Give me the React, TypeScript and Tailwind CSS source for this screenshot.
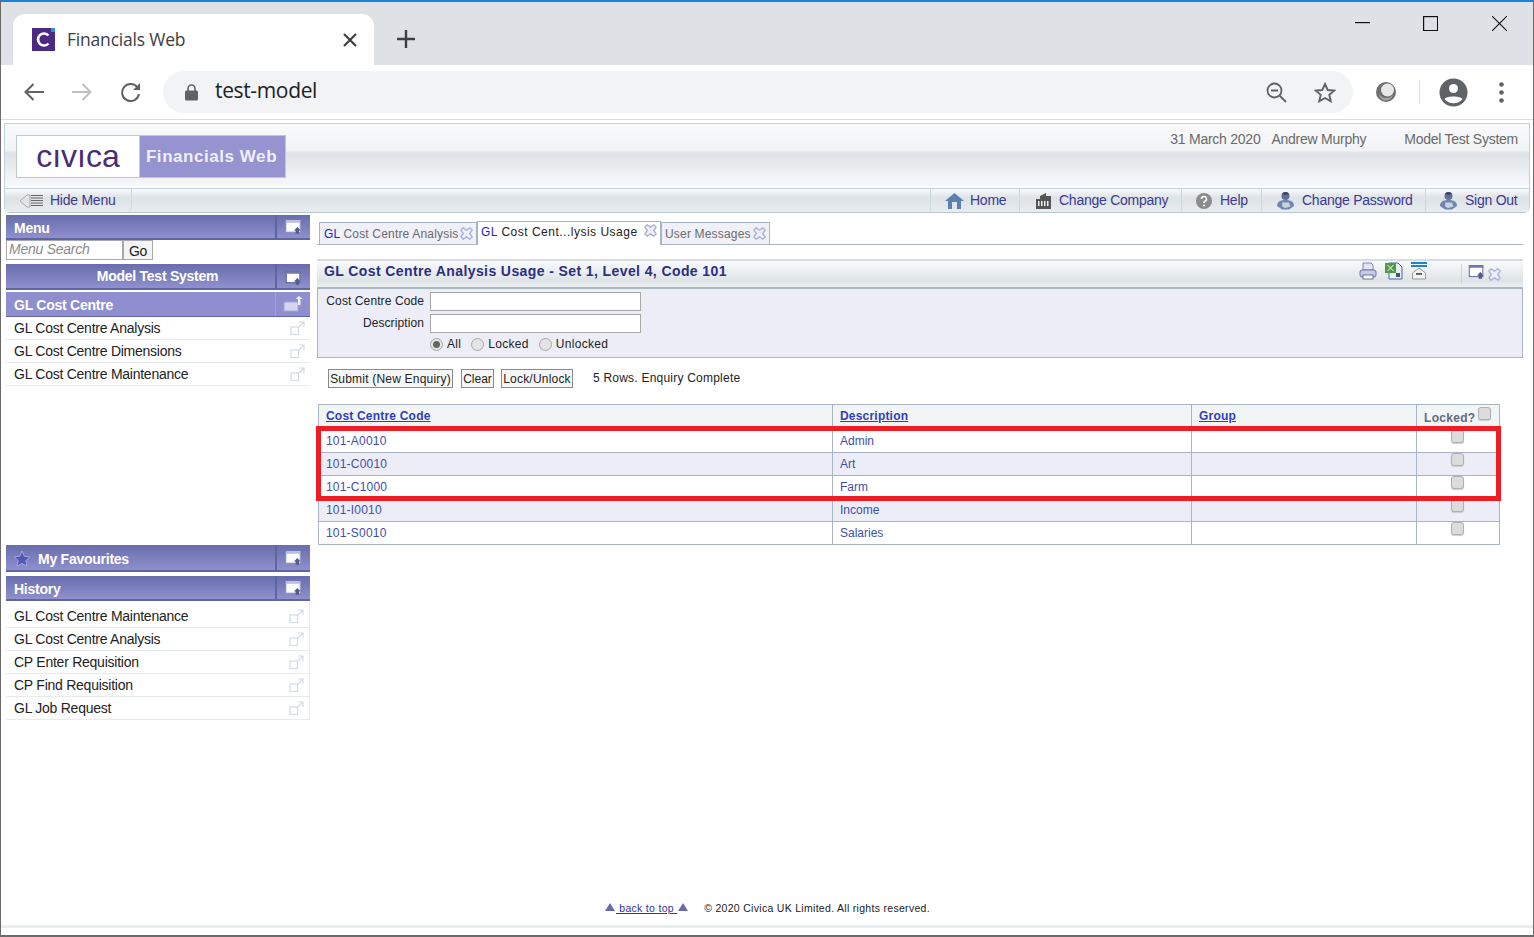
import type { ReactNode } from "react";

const headBar = "bg-[linear-gradient(#686dab,#8f90cd)] border-b-2 border-[#5f64a3]";
const menuTop = ["GL Cost Centre Analysis", "GL Cost Centre Dimensions", "GL Cost Centre Maintenance"];
const history = ["GL Cost Centre Maintenance", "GL Cost Centre Analysis", "CP Enter Requisition", "CP Find Requisition", "GL Job Request"];
const rows = [
  ["101-A0010", "Admin"],
  ["101-C0010", "Art"],
  ["101-C1000", "Farm"],
  ["101-I0010", "Income"],
  ["101-S0010", "Salaries"],
];

const WindowIcon = ({ dark = false }: { dark?: boolean }) => (
  <svg width="17" height="16" viewBox="0 0 20 18">
    <rect x="1.5" y="1.5" width="16" height="13" fill="#fff" stroke={dark ? "#4b5085" : "#d6d8ee"} />
    <rect x="1" y="1" width="17" height="3" fill={dark ? "#7277b0" : "#b9bce0"} />
    <path d="M14.5 9l4 4h-2v4h-4v-4h-2z" fill="#555c86" />
  </svg>
);

const ExtLink = () => (
  <svg width="15" height="15" viewBox="0 0 15 15" fill="none" stroke="#d3dbe7" strokeWidth="1.2">
    <rect x="1" y="6" width="7.5" height="7.5" />
    <path d="M9 1h5v5M14 1L8 7" />
  </svg>
);

const CloseCross = ({ color = "#aab1d6" }: { color?: string }) => (
  <svg width="13" height="13" viewBox="0 0 13 13" fill="#eceefa" stroke={color} strokeWidth="1.3" strokeLinejoin="round">
    <path d="M3.200.8l3.300 2.500L9.800.8l2.400 2.400-2.500 3.300 2.500 3.300-2.400 2.400-3.300-2.500-3.300 2.500L.8 9.800l2.500-3.300L.8 3.200z" />
  </svg>
);

const Person = () => (
  <svg width="19" height="19" viewBox="0 0 19 19">
    <circle cx="9.500" cy="5" r="4" fill="#5f6f96" />
    <path d="M6 3a4 4 0 0 1 7 0l-3.500 1z" fill="#3d4660" />
    <path d="M1 15c0-4 3-6 8.500-6s8.500 2 8.500 6l-5 3.500H6z" fill="#7284b3" />
    <path d="M6 11.500h7l1.500 4-5 1.500-3-1z" fill="#c9d1e4" />
  </svg>
);

function SideHead({ children, icon, className = "" }: { children: ReactNode; icon?: ReactNode; className?: string }) {
  return (
    <div className={`flex h-[25px] items-stretch ${headBar} ${className}`}>
      <div className="flex flex-1 items-center pl-[8px] pt-[3px] text-[14px] font-bold tracking-[-0.25px] text-white">{children}</div>
      <div className="flex w-[35px] items-center justify-center border-l-2 border-[#5f64a3]">{icon ?? <WindowIcon />}</div>
    </div>
  );
}

function SideRow({ label }: { label: string }) {
  return (
    <div className="flex h-[23px] items-center justify-between border-b border-[#e6ebee] pl-[8px] pr-[5px] text-[14px] tracking-[-0.25px] text-[#222]">
      <span>{label}</span>
      <ExtLink />
    </div>
  );
}

function Tab({ label, active = false, w }: { label: string; active?: boolean; w: string }) {
  return (
    <div
      className={`flex items-center justify-between pr-[3px] text-[12px] ${w} ${
        active
          ? "h-[24px] border border-b-0 border-[#a9b5c2] bg-white pl-[3px] pb-[3px] tracking-[0.5px] text-[#222]"
          : "mt-[1px] h-[23px] border border-[#a9b5c2] bg-[#f0f0f9] pl-[3px] tracking-[0.18px] text-[#6b6b6b]"
      }`}
    >
      <span className={label.startsWith("GL") && !active ? "pl-[1px]" : ""}>{label.startsWith("GL") ? <><span className="text-[#1c1ce0]">GL</span>{label.slice(2)}</> : label}</span>
      <span className={active ? "mb-[3px]" : ""}><CloseCross /></span>
    </div>
  );
}

function NavItem({ icon, label, w, pl, gap }: { icon: ReactNode; label: string; w: string; pl: string; gap: string }) {
  return (
    <div className={`flex h-full items-center border-l border-[#cdd8de] ${w} ${pl} ${gap}`}>
      {icon}
      <span className="text-[14px] tracking-[-0.25px] text-[#3b3a92]">{label}</span>
    </div>
  );
}

const Check = () => (
  <input type="checkbox" className="m-0 block h-[13px] w-[13px] appearance-none rounded-[3px] border border-[#b0b0b0] bg-[#dcdcdc] shadow-[0_1px_1px_#ccc]" />
);

const Radio = ({ on = false }: { on?: boolean }) => (
  <span className="flex h-[13px] w-[13px] items-center justify-center rounded-full border border-[#a8a8a8] bg-[#e4e4e4]">
    {on && <span className="h-[7px] w-[7px] rounded-full bg-[#666]" />}
  </span>
);

const Btn = ({ children, className = "" }: { children: ReactNode; className?: string }) => (
  <button className={`h-[19px] border border-[#8a8a8a] bg-[#f6f6f6] pt-[1px] text-center text-[12px] leading-[15px] text-[#222] ${className}`}>{children}</button>
);

const Triangle = () => (
  <svg width="10" height="8" viewBox="0 0 10 8"><path d="M5 0l5 8H0z" fill="#6a6aa8" /></svg>
);

export default function App() {
  return (
    <div className="relative flex h-[937px] w-[1534px] flex-col overflow-hidden border-x border-[#6b6b6b] border-b-2 bg-white font-['Liberation_Sans',Arial,sans-serif]">
      {/* browser tab strip */}
      <div className="flex h-[65px] shrink-0 items-end border-t-2 border-[#1a85d6] bg-[#dee1e6] pl-[12px]">
        <div className="flex h-[51px] w-[361px] items-center rounded-t-[12px] bg-white pl-[19px] pr-[17px]">
          <svg width="23" height="23" viewBox="0 0 23 23">
            <rect width="23" height="23" fill="#4b2a82" />
            <rect x="19" width="4" height="4" fill="#2b8fd8" />
            <path d="M16.500 7.500a6 6 0 1 0 0 8" fill="none" stroke="#fff" strokeWidth="2.600" />
          </svg>
          <span className="ml-[12px] flex-1 pb-[1px] font-['Open_Sans',sans-serif] text-[17.5px] tracking-[-0.2px] text-[#3c4043]">Financials Web</span>
          <svg width="14" height="14" viewBox="0 0 14 14" stroke="#3c4043" strokeWidth="2.200"><path d="M1 1l12 12M13 1L1 13" /></svg>
        </div>
        <svg className="mb-[17px] ml-[23px]" width="18" height="18" viewBox="0 0 18 18" stroke="#3c4043" strokeWidth="2.400"><path d="M9 0v18M0 9h18" /></svg>
        <div className="mb-[15px] ml-auto flex self-start pt-[14px] pr-[26px]">
          <svg className="mr-[53px] mt-[6px]" width="15" height="2"><rect width="15" height="1.200" fill="#111" /></svg>
          <svg className="mr-[54px]" width="15" height="15" fill="none" stroke="#111" strokeWidth="1.200"><rect x=".6" y=".6" width="14" height="14" /></svg>
          <svg width="15" height="15" stroke="#111" strokeWidth="1.100"><path d="M0 0l15 15M15 0L0 15" /></svg>
        </div>
      </div>

      {/* browser toolbar */}
      <div className="flex h-[54px] shrink-0 items-center bg-white">
        <svg className="ml-[23px]" width="20" height="18" viewBox="0 0 20 18" fill="none" stroke="#5f6368" strokeWidth="2"><path d="M20 9H2M9.500 1L1.500 9l8 8" /></svg>
        <svg className="ml-[28px]" width="20" height="18" viewBox="0 0 20 18" fill="none" stroke="#bdc1c6" strokeWidth="2"><path d="M0 9h18M10.500 1l8 8-8 8" /></svg>
        <svg className="ml-[28px]" width="22" height="22" viewBox="0 0 22 22" fill="none"><path d="M17.500 6.500A8.500 8.500 0 1 0 19 13" stroke="#5f6368" strokeWidth="2" /><path d="M20 2v7h-7z" fill="#5f6368" /></svg>
        <div className="ml-[21px] flex h-[42px] w-[1190px] items-center rounded-full bg-[#f1f3f4] pl-[22px] pr-[17px]">
          <svg width="13" height="17" viewBox="0 0 13 17"><path d="M3 7V4.500a3.500 3.500 0 0 1 7 0V7" fill="none" stroke="#5f6368" strokeWidth="1.600" /><rect y="6.500" width="13" height="10" rx="1.500" fill="#5f6368" /></svg>
          <span className="ml-[17px] flex-1 pb-[2px] font-['Open_Sans',sans-serif] text-[21px] tracking-[-0.35px] text-[#202124]">test-model</span>
          <svg width="21" height="21" viewBox="0 0 21 21" fill="none" stroke="#5f6368" strokeWidth="1.800"><circle cx="8.500" cy="8.500" r="7" /><path d="M13.500 13.500L20 20M5 8.500h7" /></svg>
          <svg className="ml-[27px]" width="22" height="21" viewBox="0 0 22 21" fill="none" stroke="#5f6368" strokeWidth="1.900"><path d="M11 2l2.700 6 6.500.6-4.900 4.300 1.500 6.400L11 16l-5.800 3.300 1.500-6.400L1.800 8.600 8.300 8z" /></svg>
        </div>
        <svg className="ml-[22px]" width="22" height="22" viewBox="0 0 22 22"><circle cx="11" cy="11" r="10" fill="#6f6f6f" /><circle cx="12.500" cy="9" r="6.500" fill="#e8e8e8" /><path d="M4 12a7.500 7.500 0 0 0 14 1 6 6 0 0 1-14-1z" fill="#a8a8a8" /></svg>
        <div className="ml-[22px] h-[24px] w-px bg-[#dadce0]" />
        <svg className="ml-[19px]" width="29" height="29" viewBox="0 0 29 29"><circle cx="14.500" cy="14.500" r="14" fill="#5f6368" /><circle cx="14.500" cy="10.500" r="4.500" fill="#fff" /><path d="M5.500 21c2-3.500 15.900-3.500 18 0a11.500 11.500 0 0 1-18 0z" fill="#fff" /></svg>
        <svg className="ml-[31px]" width="5" height="21" viewBox="0 0 5 21" fill="#5f6368"><circle cx="2.500" cy="2.500" r="2.300" /><circle cx="2.500" cy="10.500" r="2.300" /><circle cx="2.500" cy="18.500" r="2.300" /></svg>
      </div>
      <div className="h-[1px] shrink-0 bg-[#dadce0]" />

      {/* app header */}
      <div className="mx-[3px] mt-[3px] shrink-0 rounded-b-[6px] border border-[#c3d1d9] border-b-[#b8c6cf]">
        <div className="flex h-[64px] items-start justify-between bg-[linear-gradient(#f9fafb_0%,#f1f3f5_42%,#dfe3e7_45%,#f6f7f8_95%,#fff_100%)] pl-[11px] pr-[11px]">
          <div className="mt-[11px] flex h-[43px] w-[270px] border border-[#bccad6]">
            <div className="flex w-[123px] items-center justify-center border-r border-[#bccad6] bg-white pb-[1px] text-[32px] leading-none text-[#4a2c72]">cıvıca</div>
            <div className="flex flex-1 items-center justify-center bg-[#9593d0] pr-[2px] text-[17px] font-bold tracking-[0.55px] text-[#f0f0fa]">Financials Web</div>
          </div>
          <div className="mt-[5px] flex text-[14px] tracking-[-0.25px] text-[#6a6a6a]">
            <span>31 March 2020</span>
            <span className="ml-[11px]">Andrew Murphy</span>
            <span className="ml-[38px]">Model Test System</span>
          </div>
        </div>
        <div className="flex h-[24px] items-stretch border-t border-[#c3d1d9] bg-[linear-gradient(#f9fafb_0%,#dde2e6_40%,#e9edef_100%)]">
          <div className="flex w-[127px] items-center rounded-b-[6px] border-r border-[#cdd8de] pl-[14px]">
            <svg width="25" height="14" viewBox="0 0 25 14" fill="none"><path d="M8 1L1 7l7 6" stroke="#aaa" /><path d="M8 1h3v12H8" stroke="#aaa" /><path d="M12 1.500h12M12 4h12M12 6.500h12M12 9h12M12 11.500h12" stroke="#666" /></svg>
            <span className="ml-[6px] text-[14px] tracking-[-0.25px] text-[#3b3a92]">Hide Menu</span>
          </div>
          <div className="ml-auto flex">
            <NavItem w="w-[89px]" pl="pl-[14px]" gap="gap-[6px]" label="Home" icon={
              <svg width="19" height="17" viewBox="0 0 19 17"><path d="M9.500 1L0 9h3v8h13V9h3z" fill="#5f7fb0" /><rect x="7" y="10" width="5" height="7" fill="#dfe6f0" /></svg>
            } />
            <NavItem w="w-[162px]" pl="pl-[15px]" gap="gap-[7px]" label="Change Company" icon={
              <svg width="17" height="17" viewBox="0 0 17 17"><path d="M1 7h4V4l6-3v3h5v13H1z" fill="#555" /><path d="M3 9h1.500v5H3zM6 9h1.500v5H6zM9 9h1.500v5H9zM12 9h1.500v5H12z" fill="#eee" /></svg>
            } />
            <NavItem w="w-[80px]" pl="pl-[14px]" gap="gap-[8px]" label="Help" icon={
              <svg width="16" height="16" viewBox="0 0 16 16"><circle cx="8" cy="8" r="8" fill="#8b8b8b" /><path d="M5.500 6a2.500 2.500 0 1 1 3.500 2.300c-.7.4-1 .8-1 1.700" fill="none" stroke="#fff" strokeWidth="1.600" /><circle cx="8" cy="12.500" r="1" fill="#fff" /></svg>
            } />
            <NavItem w="w-[164px]" pl="pl-[14px]" gap="gap-[7px]" label="Change Password" icon={<Person />} />
            <NavItem w="w-[104px]" pl="pl-[13px]" gap="gap-[7px]" label="Sign Out" icon={<Person />} />
          </div>
        </div>
      </div>

      <div className="flex min-h-0 flex-1 pt-[2px]">
        {/* left menu */}
        <aside className="ml-[5px] w-[304px] shrink-0">
          <SideHead>Menu</SideHead>
          <div className="flex h-[20px] items-center">
            <input readOnly placeholder="Menu Search" className="h-[20px] w-[117px] border border-[#a8a8a8] bg-white px-[2px] pb-[1px] text-[14px] italic tracking-[-0.25px] outline-none placeholder:text-[#8a8a8a]" />
            <button className="h-[20px] w-[30px] border border-[#a8a8a8] bg-[#f4f4f4] pb-[2px] text-[14px] tracking-[-0.25px] text-[#222]">Go</button>
          </div>
          <div className={`mt-[4px] flex h-[26px] ${headBar}`}>
            <div className="flex flex-1 items-center justify-center pl-[34px] text-[14px] font-bold tracking-[-0.25px] text-white">Model Test System</div>
            <div className="flex w-[35px] items-center justify-center border-l-2 border-[#5f64a3] pt-[3px]"><WindowIcon dark /></div>
          </div>
          <div className="mt-[2px] flex h-[25px] border-b border-[#5f64a3] bg-[#8f8ecf]">
            <div className="flex flex-1 items-center pl-[8px] pt-[2px] text-[14px] font-bold tracking-[-0.25px] text-white">GL Cost Centre</div>
            <div className="flex w-[35px] items-center justify-center border-l border-[#a3a3d8]">
              <svg width="21" height="16" viewBox="0 0 21 16"><path d="M1 6h14v9H1z" fill="#d5d6ee" stroke="#a5a6d4" /><path d="M15 9V3h-2.500L16 0l4 3h-2.500v6z" fill="#eeeefa" /></svg>
            </div>
          </div>
          {menuTop.map((m) => <SideRow key={m} label={m} />)}
          <SideHead className="mt-[159px] h-[27px]" icon={<WindowIcon />}>
            <svg className="-ml-[1px] mr-[7px]" width="18" height="18" viewBox="0 0 18 18"><path d="M9 1l2.400 5.300 5.600.6-4.200 3.800 1.200 5.600L9 13.400l-5 2.900 1.200-5.600L1 6.900l5.600-.6z" fill="#5059b8" stroke="#a4a8dc" /></svg>
            My Favourites
          </SideHead>
          <SideHead className="mt-[4px]">History</SideHead>
          <div className="border-r border-[#e6ebee] pt-[4px]">
            {history.map((m) => <SideRow key={m} label={m} />)}
          </div>
        </aside>

        {/* main panel */}
        <main className="ml-[7px] flex w-[1206px] shrink-0 flex-col">
          <div className="mt-[6px] flex h-[24px] shrink-0 border-b border-[#a9b5c2] pl-[2px]">
            <Tab w="w-[158px]" label="GL Cost Centre Analysis" />
            <Tab w="w-[184px]" label="GL Cost Cent...lysis Usage" active />
            <Tab w="w-[109px]" label="User Messages" />
          </div>
          <div className="mt-[14px] flex h-[30px] shrink-0 items-center justify-between border-t-2 border-b-2 border-t-[#d5dde2] border-b-[#a9b8c1] bg-[linear-gradient(#f9fafb_0%,#e6eaed_55%,#dee3e6_75%,#edf0f2_100%)] pl-[7px]">
            <span className="pb-[5px] text-[14px] font-bold tracking-[0.4px] text-[#2b2f80]">GL Cost Centre Analysis Usage - Set 1, Level 4, Code 101</span>
            <div className="flex h-full items-center pb-[6px]">
              <svg width="18" height="18" viewBox="0 0 18 18"><path d="M4 1h8l2 2v5H4z" fill="#e3e6f2" stroke="#7d86b8" /><rect x="1" y="8" width="16" height="7" rx="2" fill="#c6cce4" stroke="#6a73aa" /><rect x="4" y="13" width="10" height="4" fill="#fff" stroke="#6a73aa" /></svg>
              <svg className="ml-[8px]" width="18" height="18" viewBox="0 0 18 18"><path d="M4 1h9l4 4v12H4z" fill="#e8f0f8" stroke="#3c6bb0" /><rect x="0" y="1" width="11" height="10" fill="#4f9a45" /><path d="M2.500 3l6 6M8.500 3l-6 6" stroke="#fff" /><rect x="11" y="11" width="4" height="4" fill="#456" /></svg>
              <svg className="ml-[8px]" width="16" height="18" viewBox="0 0 16 18"><rect y="0" width="16" height="2" fill="#1a85d6" /><rect y="3" width="16" height="2" fill="#1a85d6" /><path d="M8 6l6.500 5v6h-13v-6z" fill="#f2f2f2" stroke="#999" /><rect x="5" y="11" width="6" height="1.800" fill="#555" /></svg>
              <div className="ml-[34px] -mb-[6px] flex h-full w-[62px] items-start border-l border-[#cdd6db] pl-[6px]">
                <WindowIcon dark />
                <span className="ml-[3px] mt-[4px]"><CloseCross color="#a9b2dc" /></span>
              </div>
            </div>
          </div>
          <div className="flex h-[69px] shrink-0 flex-col border-x border-b border-[#a9b5c2] bg-[#ecedf6] pt-[3px] text-[12px] tracking-[0.3px] text-[#222]">
            <div className="flex h-[22px] items-start">
              <label className="w-[106px] whitespace-nowrap text-right tracking-[0.1px]">Cost Centre Code</label>
              <input readOnly className="ml-[6px] h-[19px] w-[211px] border border-[#a9a9a9] bg-white" />
            </div>
            <div className="flex h-[22px] items-start">
              <label className="w-[106px] whitespace-nowrap text-right tracking-[0.1px]">Description</label>
              <input readOnly className="ml-[6px] h-[19px] w-[211px] border border-[#a9a9a9] bg-white" />
            </div>
            <div className="ml-[112px] -mt-[1px] flex items-center">
              <Radio on /><span className="ml-[4px]">All</span>
              <span className="ml-[10px]"><Radio /></span><span className="ml-[4px]">Locked</span>
              <span className="ml-[10px]"><Radio /></span><span className="ml-[4px]">Unlocked</span>
            </div>
          </div>
          <div className="ml-[11px] mt-[11px] flex h-[19px] shrink-0 items-center">
            <Btn className="w-[125px] tracking-[0.2px]">Submit (New Enquiry)</Btn>
            <Btn className="ml-[8px] w-[33px]">Clear</Btn>
            <Btn className="ml-[7px] w-[72px] tracking-[0.2px]">Lock/Unlock</Btn>
            <span className="mb-[2px] ml-[20px] text-[12px] tracking-[0.22px] text-[#222]">5 Rows. Enquiry Complete</span>
          </div>
          <table className="mt-[16px] ml-[1px] w-[1181px] shrink-0 table-fixed border-collapse border border-[#a9b5c2] text-[12px]">
            <colgroup>
              <col className="w-[514px]" />
              <col className="w-[359px]" />
              <col className="w-[225px]" />
              <col className="w-[83px]" />
            </colgroup>
            <thead>
              <tr className="h-[25px] bg-[#f2f5f6]">
                {["Cost Centre Code", "Description", "Group"].map((h) => (
                  <th key={h} className="border border-[#a9b5c2] pb-[2px] pl-[7px] text-left font-bold tracking-[0.2px] text-[#2f3fc0] underline">{h}</th>
                ))}
                <th className="border border-[#a9b5c2] pl-[7px] text-left font-bold tracking-[0.3px] text-[#5f6b7c]">
                  <div className="flex items-start">
                    <span className="pt-[2px]">Locked?</span>
                    <span className="ml-[3px]"><Check /></span>
                  </div>
                </th>
              </tr>
            </thead>
            <tbody>
              {rows.map(([code, desc], i) => (
                <tr key={code} className={`h-[23px] ${i % 2 ? "bg-[#ecedf6]" : "bg-white"}`}>
                  <td className="border border-[#a9b5c2] pl-[7px] tracking-[0.2px] text-[#3f4db0]">{code}</td>
                  <td className="border border-[#a9b5c2] pl-[7px] text-[#3f4db0]">{desc}</td>
                  <td className="border border-[#a9b5c2]" />
                  <td className="border border-[#a9b5c2] align-top">
                    <div className="flex justify-center pr-[1px]"><Check /></div>
                  </td>
                </tr>
              ))}
            </tbody>
          </table>
        </main>
      </div>

      {/* footer */}
      <div className="flex h-[17px] shrink-0 items-center justify-center pl-[1px] pt-[2px] text-[10.5px] tracking-[0.3px] text-[#222]">
        <span className="mb-[4px]"><Triangle /></span>
        <span className="ml-[1px] text-[#3033a8] underline">&nbsp;back to top&nbsp;</span>
        <span className="ml-[1px] mb-[4px]"><Triangle /></span>
        <span className="ml-[16px]">© 2020 Civica UK Limited. All rights reserved.</span>
      </div>
      <div className="mb-[7px] mt-[9px] h-[3px] shrink-0 bg-[#e8edf0]" />

      {/* red highlight annotation */}
      <div className="pointer-events-none absolute left-[315px] top-[426px] h-[75px] w-[1185px] border-[5px] border-[#ee1c25]" />
    </div>
  );
}
